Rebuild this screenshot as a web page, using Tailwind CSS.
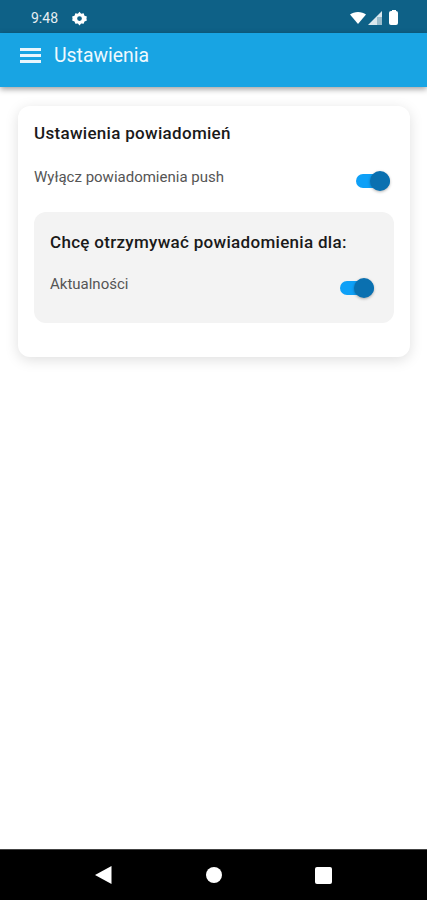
<!DOCTYPE html>
<html>
<head>
<meta charset="utf-8">
<script src="https://cdn.jsdelivr.net/npm/@tailwindcss/browser@4"></script>
</head>
<body class="m-0 bg-white font-['Roboto',sans-serif]">
<div class="w-[427px] h-[900px] flex flex-col overflow-hidden bg-white">
  <div class="h-[33px] bg-[#0e6187] flex items-center justify-between pl-[31px] pr-[29px] pt-[3px] shrink-0">
    <div class="flex items-center gap-[14px]">
      <span class="text-[14px] leading-none text-[#e6eef2]">9:48</span>
      <svg class="w-[15px] h-[15px]" viewBox="0 0 24 24" fill="#fff"><path fill-rule="evenodd" d="M12 1l2.6 3.2 4-.7 1.4 3.9 3.8 1.5-.7 3.1.7 3.1-3.8 1.5-1.4 3.9-4-.7L12 23l-2.6-3.2-4 .7L4 16.6.2 15.1.9 12 .2 8.9 4 7.4l1.4-3.9 4 .7L12 1zm0 7.2a3.8 3.8 0 100 7.6 3.8 3.8 0 000-7.6z"/></svg>
    </div>
    <div class="flex items-center gap-[7px]">
      <svg class="w-[16px] h-[12px]" viewBox="0 0 16 12" fill="#fff"><path d="M0 2.6C2 .9 4.9 0 8 0s6 .9 8 2.6L8 12 0 2.6z"/></svg>
      <svg class="w-[14px] h-[14px] -ml-[5px]" viewBox="0 0 14 14"><path d="M14 0v14H0z" fill="#fff" fill-opacity=".85"/><path d="M9 6h5v8H9z" fill="#7fa9bd" fill-opacity=".7"/></svg>
      <div class="relative w-[9px] h-[14px] bg-white rounded-[2px]"><div class="absolute -top-[1px] left-[2.5px] w-[4px] h-[2px] bg-white"></div></div>
    </div>
  </div>
  <div class="h-[54px] bg-[#18a4e3] flex items-start pl-[20px] pt-[11px] gap-[13px] shadow-[0_2px_6px_rgba(0,0,0,0.4)] relative z-10 shrink-0">
    <div class="flex flex-col gap-[3px] w-[21px] pt-[4px]">
      <div class="h-[3px] bg-[#e8f6fd]"></div>
      <div class="h-[3px] bg-[#e8f6fd]"></div>
      <div class="h-[3px] bg-[#e8f6fd]"></div>
    </div>
    <span class="text-[19.4px] leading-[24px] text-[#eef9fe]">Ustawienia</span>
  </div>
  <div class="flex-1 pl-[18px] pr-[17px] pt-[19px]">
    <div class="h-[251px] bg-white rounded-[12px] shadow-[0_3px_14px_rgba(0,0,0,0.13)] pl-[16px] pr-[16px] pt-[17px]">
      <div class="text-[17px] tracking-[0.3px] leading-[20px] font-medium text-[#1a1a1a]">Ustawienia powiadomień</div>
      <div class="flex justify-between items-start mt-[23px] pr-[4px]">
        <span class="text-[15px] leading-[20px] text-[#555] mt-[1px]">Wyłącz powiadomienia push</span>
        <div class="relative w-[34px] h-[14px] mt-[8px] rounded-full bg-[#0ea0f7]">
          <div class="absolute right-0 -top-[3px] w-[20px] h-[20px] rounded-full bg-[#0a70b0] shadow-[0_1px_3px_rgba(0,0,0,0.3)]"></div>
        </div>
      </div>
      <div class="mt-[24px] h-[111px] bg-[#f3f3f3] rounded-[12px] px-[16px] pt-[20px]">
        <div class="text-[17px] tracking-[0.3px] leading-[20px] font-medium text-[#1a1a1a]">Chcę otrzymywać powiadomienia dla:</div>
        <div class="flex justify-between items-start mt-[22px] pr-[4px]">
          <span class="text-[15px] leading-[20px] text-[#555]">Aktualności</span>
          <div class="relative w-[34px] h-[14px] mt-[7px] rounded-full bg-[#0ea0f7]">
            <div class="absolute right-0 -top-[3px] w-[20px] h-[20px] rounded-full bg-[#0a70b0] shadow-[0_1px_3px_rgba(0,0,0,0.3)]"></div>
          </div>
        </div>
      </div>
    </div>
  </div>
  <div class="h-[51px] bg-black flex items-center justify-between pl-[95px] pr-[95px] shrink-0 border-t border-[#444]">
    <svg class="w-[17px] h-[18px]" viewBox="0 0 17 18" fill="#fff"><path d="M16.5 0v18L0 9z"/></svg>
    <div class="w-[16px] h-[16px] rounded-full bg-white"></div>
    <div class="w-[17px] h-[17px] rounded-[2px] bg-white"></div>
  </div>
</div>
</body>
</html>
